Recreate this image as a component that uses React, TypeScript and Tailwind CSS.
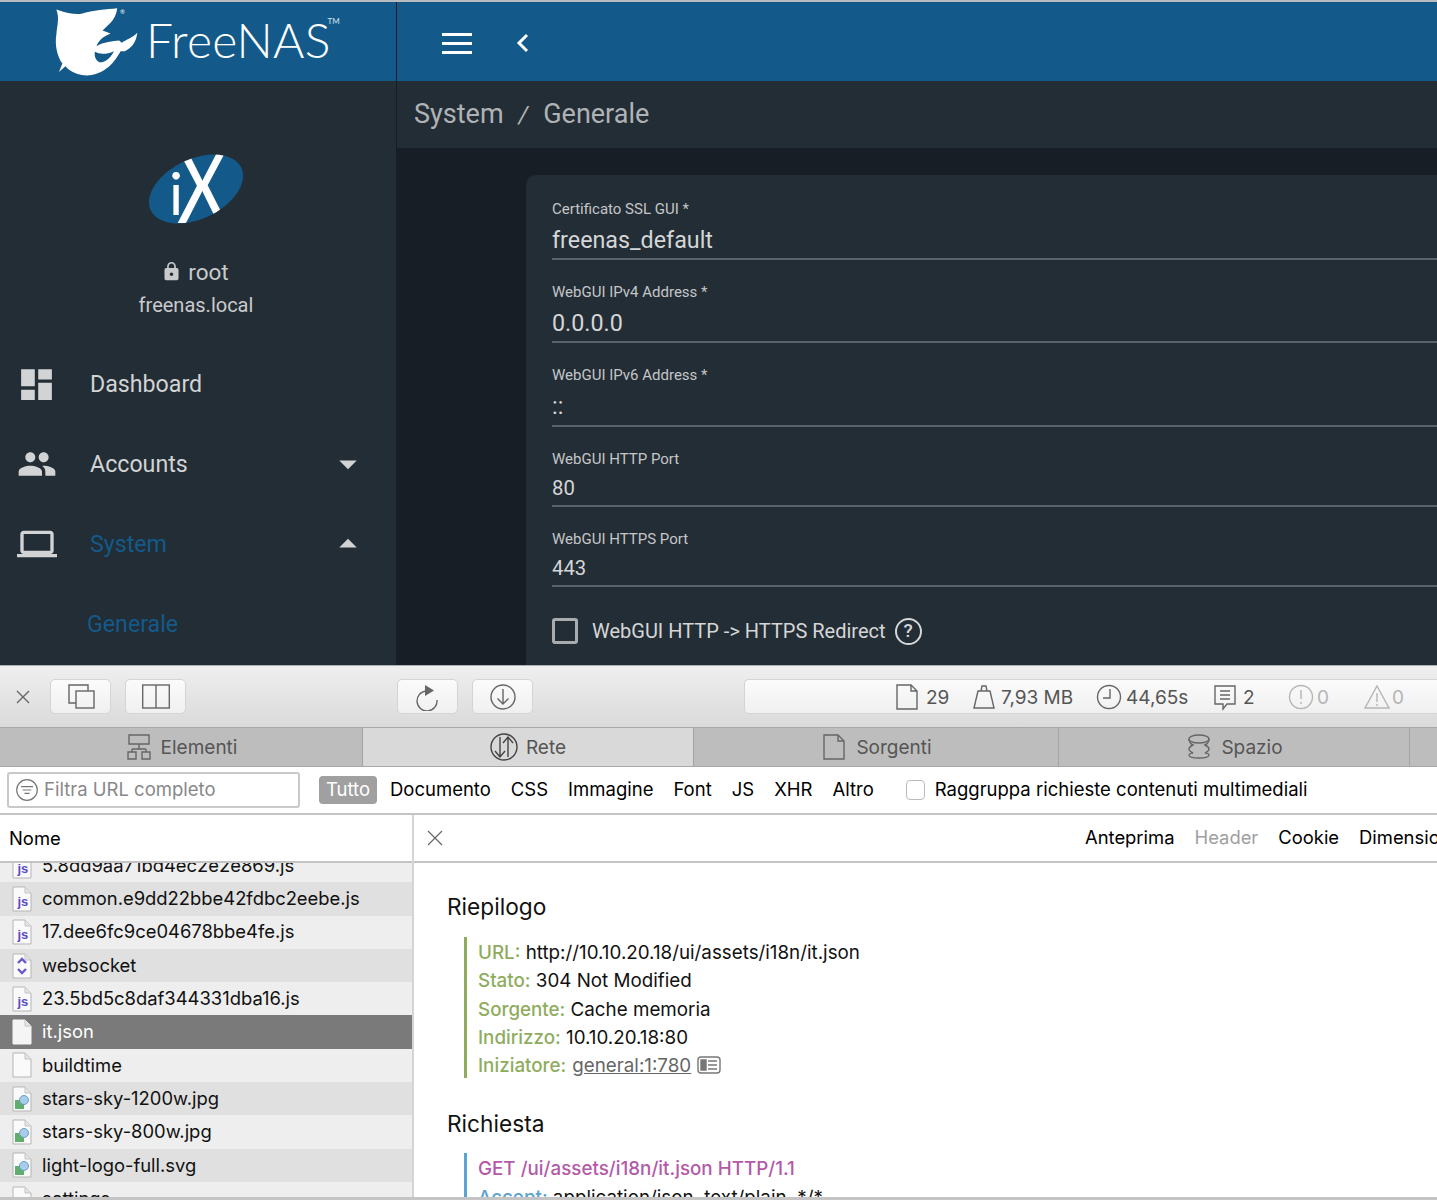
import React from 'react';
import { MdDashboard, MdPeople, MdLaptop, MdLock, MdArrowDropDown, MdArrowDropUp } from 'react-icons/md';

const Stroke = ({ size = 28, children, className = 'text-[#666]' }: { size?: number; children: React.ReactNode; className?: string }) => (
    <svg width={size} height={size} viewBox="0 0 28 28" fill="none" stroke="currentColor" strokeWidth="1.4" className={`shrink-0 ${className}`}>
        {children}
    </svg>
);

const PageGlyph = () => <path d="M4 2h14l6 6v18H4zM18 2v6h6" />;

function FreeNasMark() {
    return (
        <svg width="87" height="72" viewBox="160 15 260 215" className="shrink-0">
            <path
                fill="#fff"
                fillRule="evenodd"
                d="M170 25C200 36 225 40 245 38C280 28 320 25 352 22C349 42 342 56 332 65L308 88L332 97C310 106 296 118 290 135C310 122 340 120 358 118L365 125C380 115 400 108 412 95C408 125 395 140 375 150L362 150C345 180 320 215 270 222C240 224 215 215 197 195L178 212L188 187C172 165 165 130 170 100C172 75 180 50 170 25ZM285 152C300 160 320 160 342 150C330 175 310 185 298 183C288 178 283 165 285 152Z"
            />
            <text x="360" y="38" fontSize="18" fill="#fff" style={{ fontFamily: 'Lato, sans-serif' }}>®</text>
        </svg>
    );
}

function IxLogo() {
    return (
        <svg width="94" height="70" viewBox="0 0 94 70">
            <defs>
                <clipPath id="ix-oval">
                    <ellipse cx="47" cy="35" rx="50" ry="30" transform="rotate(-25 47 35)" />
                </clipPath>
            </defs>
            <ellipse cx="47" cy="35" rx="50" ry="30" transform="rotate(-25 47 35)" fill="#135a8a" />
            <g clipPath="url(#ix-oval)" fill="#fff" style={{ fontFamily: 'Lato, sans-serif' }}>
                <text x="20" y="61" fontSize="59">i</text>
                <text x="0" y="0" fontSize="100" transform="translate(28 69) scale(0.78 1)">X</text>
            </g>
        </svg>
    );
}

function NavItem({ icon, label, caret, active, indent }: { icon?: React.ReactNode; label: string; caret?: 'up' | 'down'; active?: boolean; indent?: boolean }) {
    return (
        <div className="flex h-20 items-center">
            {icon ? <div className="flex w-[90px] justify-center pr-[17px]">{icon}</div> : null}
            <span className={`text-[23.2px] ${indent ? 'pl-[87px]' : ''} ${active ? 'text-[#135a8a]' : 'text-[#d2d3d4]'}`}>{label}</span>
            {caret === 'down' && <MdArrowDropDown className="ml-auto mr-[27px] text-[#d2d3d4]" size={42} />}
            {caret === 'up' && <MdArrowDropUp className="ml-auto mr-[27px] text-[#d2d3d4]" size={42} />}
        </div>
    );
}

function Field({ label, value, small, tall }: { label: string; value: string; small?: boolean; tall?: boolean }) {
    return (
        <div className="mb-5 border-b-2 border-[#5a636b]">
            <div className="h-6 text-[15px] leading-[25px] text-[#c4c6c8]">{label}</div>
            <div className={small ? 'flex h-[34px] items-center text-[20.3px] text-[#d5d6d7]' : tall ? 'flex h-[38px] items-center pt-[1px] text-[23.3px] text-[#d5d6d7]' : 'flex h-[37px] items-center pt-[1px] text-[23.3px] text-[#d5d6d7]'}>{value}</div>
        </div>
    );
}

function ToolButton({ children }: { children: React.ReactNode }) {
    return <div className="flex h-[35px] w-[61px] items-center justify-center rounded-[5px] border border-[#d4d4d4] bg-gradient-to-b from-[#fbfbfb] to-[#f0f0f0]">{children}</div>;
}

function DevTab({ width, active, icon, label }: { width: string; active?: boolean; icon: React.ReactNode; label: string }) {
    return (
        <div className={`flex items-center justify-center gap-[8px] border-r border-[#a4a4a4] ${width} ${active ? 'bg-[#d9d9d9]' : ''}`}>
            {icon}
            <span className="pt-[3px]">{label}</span>
        </div>
    );
}

function StatusItem({ icon, text, className, muted }: { icon: React.ReactNode; text: string; className: string; muted?: boolean }) {
    return (
        <div className={`flex items-center ${className} ${muted ? 'text-[#b5b5b5]' : 'text-[#555]'}`}>
            {icon}
            <span className="pt-[3px]">{text}</span>
        </div>
    );
}

function FileIcon({ kind, selected }: { kind: 'js' | 'ws' | 'img' | 'doc'; selected?: boolean }) {
    return (
        <svg width="20" height="26" viewBox="0 0 20 26" className="shrink-0">
            <path d="M1 1h12l6 6v18H1z" fill={selected ? '#f5f5f5' : '#fafafa'} stroke={selected ? '#f5f5f5' : '#b5b5b5'} />
            <path d="M13 1v6h6" fill="#e4e4e4" stroke="#c4c4c4" />
            {kind === 'js' && (
                <text x="5.5" y="20" fontSize="13" fontWeight="700" fill="#5a4bc4" style={{ fontFamily: "'Liberation Sans', sans-serif" }}>js</text>
            )}
            {kind === 'ws' && (
                <g fill="none" stroke="#6a58cc" strokeWidth="2.4">
                    <path d="M6 10l4-4 4 4M6 16l4 4 4-4" />
                </g>
            )}
            {kind === 'img' && (
                <g>
                    <rect x="3" y="14" width="9" height="9" fill="#5fae6b" />
                    <circle cx="12" cy="14" r="4.5" fill="#a8cdea" stroke="#6d9cc4" />
                </g>
            )}
        </svg>
    );
}

const files: { name: string; kind: 'js' | 'ws' | 'img' | 'doc' }[] = [
    { name: '5.8dd9aa71bd4ec2e2e869.js', kind: 'js' },
    { name: 'common.e9dd22bbe42fdbc2eebe.js', kind: 'js' },
    { name: '17.dee6fc9ce04678bbe4fe.js', kind: 'js' },
    { name: 'websocket', kind: 'ws' },
    { name: '23.5bd5c8daf344331dba16.js', kind: 'js' },
    { name: 'it.json', kind: 'doc' },
    { name: 'buildtime', kind: 'doc' },
    { name: 'stars-sky-1200w.jpg', kind: 'img' },
    { name: 'stars-sky-800w.jpg', kind: 'img' },
    { name: 'light-logo-full.svg', kind: 'img' },
    { name: 'settings', kind: 'doc' },
];

function SummaryLine({ label, value }: { label: string; value: React.ReactNode }) {
    return (
        <div className="h-[28.3px] leading-[28px]">
            <span className="font-medium text-[#8fac5e]">{label}</span> {value}
        </div>
    );
}

export default function App() {
    return (
        <div className="flex h-[1200px] w-[1437px] flex-col overflow-hidden bg-white">
            {/* FreeNAS page */}
            <div className="flex h-[665px] shrink-0 overflow-hidden border-t-2 border-[#b9bcbe] font-['Roboto',sans-serif]">
                <aside className="w-[397px] shrink-0 border-r border-[#161d24] bg-[#232d35]">
                    <div className="flex h-[79px] items-center gap-[6px] overflow-hidden bg-[#135a8a] pl-[53px]">
                        <FreeNasMark />
                        <span className="-mt-[3px] font-['Lato',sans-serif] text-[48px] font-light tracking-[0.2px] text-white">FreeNAS</span>
                        <span className="-ml-[9px] mb-[42px] font-['Lato',sans-serif] text-[8px] text-[#d5e2ec]">TM</span>
                    </div>
                    <div className="flex flex-col items-center pt-[73px] pr-[4px]">
                        <IxLogo />
                        <div className="mt-[32px] flex h-[34px] items-center gap-[6px] pr-[2px] text-[22.5px] text-[#c9cacb]">
                            <MdLock size={21} className="-mt-[4px]" />
                            <span>root</span>
                        </div>
                        <div className="h-[28px] text-[20px] text-[#c9cacb]">freenas.local</div>
                    </div>
                    <nav className="mt-[26px]">
                        <NavItem icon={<MdDashboard size={41} className="text-[#d2d3d4]" />} label="Dashboard" />
                        <NavItem icon={<MdPeople size={40} className="text-[#d2d3d4]" />} label="Accounts" caret="down" />
                        <NavItem icon={<MdLaptop size={40} className="text-[#d2d3d4]" />} label="System" caret="up" active />
                        <NavItem label="Generale" active indent />
                    </nav>
                </aside>
                <div className="flex min-w-0 flex-1 flex-col bg-[#171e26]">
                    <div className="flex h-[79px] shrink-0 items-center gap-[43px] bg-[#135a8a] pl-[45px] pt-[3px]">
                        <div className="flex w-[30px] flex-col gap-[6px]">
                            <div className="h-[3px] bg-white" />
                            <div className="h-[3px] bg-white" />
                            <div className="h-[3px] bg-white" />
                        </div>
                        <svg width="14" height="22" viewBox="0 0 14 22" fill="none" stroke="#fff" strokeWidth="3">
                            <path d="M12 3L4 11l8 8" />
                        </svg>
                    </div>
                    <div className="flex h-[67px] shrink-0 items-center bg-[#232d35] pl-[17px] text-[27px] text-[#b0b3b5]">
                        <span>System</span>
                        <span className="mx-[15px] text-[24px] italic">/</span>
                        <span>Generale</span>
                    </div>
                    <div className="ml-[129px] mt-[27px] flex-1 rounded-tl-[10px] bg-[#232d35] pl-[26px] pt-[22px]">
                        <Field label="Certificato SSL GUI *" value="freenas_default" />
                        <Field label="WebGUI IPv4 Address *" value="0.0.0.0" />
                        <Field label="WebGUI IPv6 Address *" value="::" tall />
                        <Field label="WebGUI HTTP Port" value="80" small />
                        <Field label="WebGUI HTTPS Port" value="443" small />
                        <div className="mt-[29px] flex items-center text-[20px] text-[#d5d6d7]">
                            <div className="h-[26px] w-[26px] rounded-[3px] border-[3px] border-[#a9acae]" />
                            <span className="ml-[14px]">WebGUI HTTP -&gt; HTTPS Redirect</span>
                            <div className="ml-[9px] flex h-[27px] w-[27px] items-center justify-center rounded-full border-2 border-[#d5d6d7] text-[19px] font-medium">?</div>
                        </div>
                    </div>
                </div>
            </div>

            {/* Web inspector */}
            <div className="flex min-h-0 flex-1 flex-col border-t border-[#b0b0b0] font-['Inter',sans-serif] text-black">
                <div className="flex h-[61px] shrink-0 items-center bg-gradient-to-b from-[#efefef] to-[#dadada]">
                    <div className="flex w-[50px] justify-center pr-[4px]">
                        <svg width="16" height="16" viewBox="0 0 16 16" stroke="#666" strokeWidth="1.4"><path d="M2 2l12 12M14 2L2 14" /></svg>
                    </div>
                    <ToolButton>
                        <Stroke><path d="M9 20H2V2h19v6" /><rect x="9" y="8" width="18" height="17" /></Stroke>
                    </ToolButton>
                    <div className="ml-[14px]">
                        <ToolButton>
                            <Stroke><rect x="0.7" y="2" width="26.6" height="23" /><path d="M14 2v23" /></Stroke>
                        </ToolButton>
                    </div>
                    <div className="ml-[211px]">
                        <ToolButton>
                            <Stroke>
                                <path d="M12 8A10 10 0 1 0 23 17" />
                                <path d="M11 2l9 5.5-9 5.5z" fill="currentColor" stroke="none" />
                            </Stroke>
                        </ToolButton>
                    </div>
                    <div className="ml-[14px]">
                        <ToolButton>
                            <Stroke><circle cx="14" cy="14" r="12" /><path d="M14 6v15M8.5 15.5l5.5 5.5 5.5-5.5" /></Stroke>
                        </ToolButton>
                    </div>
                    <div className="ml-[211px] flex h-[35px] flex-1 items-center rounded-l-[5px] border border-r-0 border-[#d4d4d4] bg-gradient-to-b from-[#fbfbfb] to-[#f0f0f0] pl-[148px] text-[19px]">
                        <StatusItem className="w-[77px] gap-[5px]" text="29" icon={<Stroke><PageGlyph /></Stroke>} />
                        <StatusItem className="w-[125px] gap-[3px]" text="7,93 MB" icon={<Stroke><path d="M4 25L8 8h12l4 17zM11 8l1-5h4l1 5" /></Stroke>} />
                        <StatusItem className="w-[116px] gap-[3px]" text="44,65s" icon={<Stroke><circle cx="14" cy="14" r="11.5" /><path d="M15 6v9H8" /></Stroke>} />
                        <StatusItem className="w-[76px] gap-[4px]" text="2" icon={<Stroke><path d="M4 3h20v18h-8l-4 5v-5H4zM9 8h10M9 12h10M9 16h10" /></Stroke>} />
                        <StatusItem muted className="w-[76px] gap-[2px]" text="0" icon={<Stroke className="text-[#b5b5b5]"><circle cx="14" cy="14" r="11.5" /><path d="M14 7v9M14 19v2" /></Stroke>} />
                        <StatusItem muted className="gap-[1px]" text="0" icon={<Stroke className="text-[#b5b5b5]"><path d="M14 3l12 22H2zM14 10v9M14 21v2" /></Stroke>} />
                    </div>
                </div>

                <div className="flex h-[40px] shrink-0 border-y border-[#a8a8a8] bg-[#bdbdbd] text-[19px] text-[#555]">
                    <DevTab width="w-[363px]" label="Elementi" icon={<Stroke><path d="M4 2h20v9H4zM14 11v5M7 16h14M7 16v3M21 16v3M3 19h8v7H3zM17 19h8v7h-8z" /></Stroke>} />
                    <DevTab width="w-[331px]" active label="Rete" icon={<Stroke size={28} className="text-[#444]"><circle cx="14" cy="14" r="13" /><path d="M10 4v20M5 18l5 6 5-6M18 24V4M13 10l5-6 5 6" /></Stroke>} />
                    <DevTab width="w-[365px]" label="Sorgenti" icon={<Stroke><PageGlyph /></Stroke>} />
                    <DevTab width="w-[351px]" label="Spazio" icon={<Stroke><ellipse cx="14" cy="6" rx="10" ry="4" /><path d="M4 6c0 3 2 5 4 6-2 1-4 2-4 4s2 3 4 4c-2 0-4 1-4 2 0 2 5 3 10 3s10-1 10-3c0-1-2-2-4-2 2-1 4-2 4-4s-2-3-4-4c2-1 4-3 4-6" /></Stroke>} />
                </div>

                <div className="flex h-[48px] shrink-0 items-center border-b-2 border-[#c4c4c4] pl-[7px] text-[18.5px]">
                    <div className="flex h-[36px] w-[293px] items-center gap-[5px] rounded-[3px] border-2 border-[#c9c9c9] pl-[6px] text-[#888]">
                        <Stroke size={24} className="text-[#777]"><circle cx="14" cy="14" r="12" /><path d="M7 10h14M9 14h10M11 18h6" /></Stroke>
                        <span>Filtra URL completo</span>
                    </div>
                    <div className="ml-[19px] flex h-[28px] w-[58px] items-center justify-center rounded-[4px] bg-[#a0a0a0] text-white">Tutto</div>
                    <span className="ml-[13px]">Documento</span>
                    <span className="ml-[20px]">CSS</span>
                    <span className="ml-[20px]">Immagine</span>
                    <span className="ml-[20px]">Font</span>
                    <span className="ml-[20px]">JS</span>
                    <span className="ml-[20px]">XHR</span>
                    <span className="ml-[20px]">Altro</span>
                    <div className="ml-[32px] h-[20px] w-[19px] rounded-[4px] border border-[#bbb] bg-white" />
                    <span className="ml-[10px]">Raggruppa richieste contenuti multimediali</span>
                </div>

                <div className="flex min-h-0 flex-1 border-b-[3px] border-[#c4c4c4]">
                    <div className="flex w-[414px] shrink-0 flex-col border-r-2 border-[#d4d4d4]">
                        <div className="flex h-[48px] shrink-0 items-center border-b-2 border-[#c4c4c4] pl-[9px] pt-[2px] text-[18.4px]">Nome</div>
                        <div className="min-h-0 flex-1 overflow-hidden">
                            <div className="-mt-[14px]">
                                {files.map((file, i) => {
                                    const selected = file.name === 'it.json';
                                    return (
                                        <div
                                            key={file.name}
                                            className={`flex h-[33.3px] items-center gap-[10px] pl-[12px] text-[18.4px] ${selected ? 'bg-[#7a7a7a] text-white' : i % 2 ? 'bg-[#e0e0e0] text-[#111]' : 'bg-[#eeeeee] text-[#111]'}`}
                                        >
                                            <FileIcon kind={file.kind} selected={selected} />
                                            <span>{file.name}</span>
                                        </div>
                                    );
                                })}
                            </div>
                        </div>
                    </div>
                    <div className="flex min-w-0 flex-1 flex-col overflow-hidden">
                        <div className="flex h-[48px] shrink-0 items-center whitespace-nowrap border-b-2 border-[#c4c4c4] pl-[13px] text-[18.4px]">
                            <svg width="16" height="16" viewBox="0 0 16 16" stroke="#666" strokeWidth="1.2" className="shrink-0"><path d="M1 1l14 14M15 1L1 15" /></svg>
                            <span className="ml-[642px]">Anteprima</span>
                            <span className="ml-[20px] text-[#a0a0a0]">Header</span>
                            <span className="ml-[20px]">Cookie</span>
                            <span className="ml-[20px]">Dimensioni</span>
                        </div>
                        <div className="min-h-0 flex-1 overflow-hidden pl-[33px] pt-[28px] text-[18.8px] text-[#111]">
                            <h2 className="h-[32px] text-[22.7px] leading-[32px]">Riepilogo</h2>
                            <div className="ml-[17px] mt-[14px] border-l-[3px] border-[#8fac5e] pl-[11px] pt-[2px]">
                                <SummaryLine label="URL:" value="http://10.10.20.18/ui/assets/i18n/it.json" />
                                <SummaryLine label="Stato:" value="304 Not Modified" />
                                <SummaryLine label="Sorgente:" value="Cache memoria" />
                                <SummaryLine label="Indirizzo:" value="10.10.20.18:80" />
                                <div className="flex h-[26.3px] items-start gap-[6px] leading-[28px]">
                                    <span className="font-medium text-[#8fac5e]">Iniziatore:</span>
                                    <span className="text-[#666] underline">general:1:780</span>
                                    <svg width="24" height="18" viewBox="0 0 24 18" fill="none" stroke="#777" strokeWidth="1.4" className="mt-[4px]">
                                        <rect x="1" y="1" width="22" height="16" rx="3" />
                                        <path d="M4 4h5v10H4zM11 5h9M11 9h9M11 13h9" fill="#777" />
                                    </svg>
                                </div>
                            </div>
                            <h2 className="mt-[30px] h-[32px] text-[22.7px] leading-[32px]">Richiesta</h2>
                            <div className="ml-[17px] mt-[13px] border-l-[3px] border-[#5ba3d0] pl-[11px] pt-[2px]">
                                <div className="h-[28.3px] font-medium leading-[28px] text-[#b35aa8]">GET /ui/assets/i18n/it.json HTTP/1.1</div>
                                <div className="h-[28.3px] leading-[28px]">
                                    <span className="font-medium text-[#5ba3d0]">Accept:</span> application/json, text/plain, */*
                                </div>
                            </div>
                        </div>
                    </div>
                </div>
            </div>
        </div>
    );
}
